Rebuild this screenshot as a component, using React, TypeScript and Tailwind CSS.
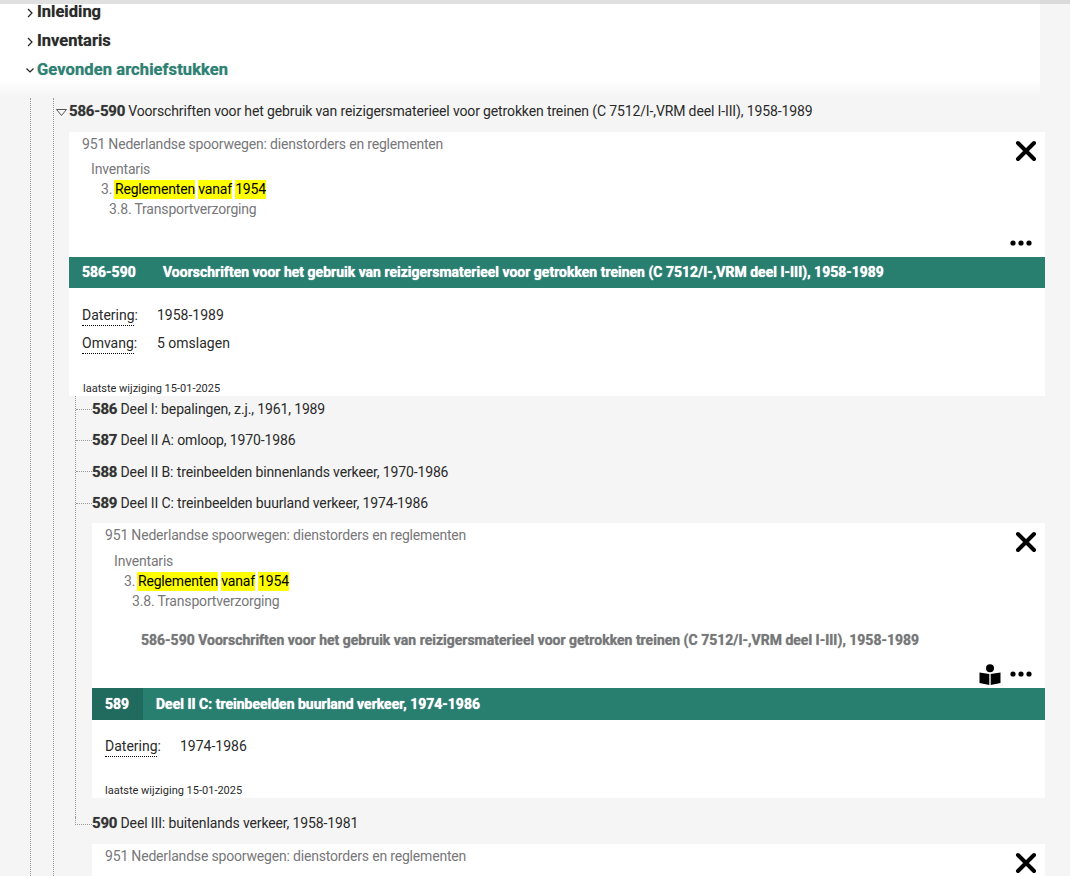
const font = { fontFamily: '"Roboto", "Liberation Sans", sans-serif' };

const heavy = "[text-shadow:0_0_1px_rgba(0,0,0,0.4)]";
const heavyLight = "[text-shadow:0_0_1px_#fff]";

function CloseIcon() {
  return (
    <svg className="h-[22px] w-[22px]" viewBox="0 0 22 22" fill="none" stroke="#000" strokeWidth="4" strokeLinecap="round">
      <path d="M3 3l16 16M19 3L3 19" />
    </svg>
  );
}

function Dots() {
  return (
    <svg className="h-[6px] w-[22px]" viewBox="0 0 22 6" fill="#000">
      <circle cx="3" cy="3" r="2.6" />
      <circle cx="11" cy="3" r="2.6" />
      <circle cx="19" cy="3" r="2.6" />
    </svg>
  );
}

function ReaderIcon() {
  return (
    <svg className="h-[21px] w-[22px]" viewBox="0 0 22 21" fill="#000">
      <circle cx="11" cy="4.2" r="4" />
      <path d="M0.5 8.5L10.3 10V21L0.5 19Z" />
      <path d="M21.5 8.5L11.7 10V21L21.5 19Z" />
    </svg>
  );
}

function Chevron() {
  return (
    <svg className="h-[10px] w-[6px] shrink-0" viewBox="0 0 6 10" fill="none" stroke="#222" strokeWidth="1.2">
      <path d="M1 1L5 5L1 9" />
    </svg>
  );
}

function Mark({ children, className = "" }: { children: string; className?: string }) {
  return <span className={`inline-block h-[19px] bg-[#ffff00] leading-[19px] text-black ${className}`}>{children}</span>;
}

function Breadcrumb({ parent }: { parent?: string }) {
  return (
    <div className="text-[14px] leading-[20px] tracking-[-0.18px] text-[#77777a]">
      <div className="pl-[13px] pt-[2px]">951 Nederlandse spoorwegen: dienstorders en reglementen</div>
      <div className={`${parent ? "mt-[6px]" : "mt-[5px]"} pl-[22px]`}>Inventaris</div>
      <div className="h-[20px] pl-[32px]">
        3. <Mark className="-ml-[1.5px] pl-[1px]">Reglementen</Mark> <Mark>vanaf</Mark> <Mark>1954</Mark>
      </div>
      <div className="pl-[40px]">3.8. Transportverzorging</div>
      {parent && (
        <div className={`mt-[19px] pl-[49px] font-bold tracking-normal ${heavy}`}>{parent}</div>
      )}
    </div>
  );
}

function Field({ label, value }: { label: string; value: string }) {
  return (
    <div className="flex h-[28px] items-start text-[14px] leading-[20px] text-[#2a2a2a]">
      <span className="w-[75px] shrink-0">
        <span className="block w-[52px] whitespace-nowrap border-b border-dotted border-black">{label}</span>
      </span>
      <span>{value}</span>
    </div>
  );
}

function TreeRow({ code, text, className = "h-[31.5px]" }: { code: string; text: string; className?: string }) {
  return (
    <div className={`flex items-center ${className}`}>
      <span className="w-[16px] shrink-0 border-t border-dotted border-[#999]" />
      <div className="text-[14px] tracking-[-0.13px] text-[#2a2a2a]">
        <b className={`text-[15px] tracking-[-0.2px] text-[#333] ${heavy}`}>{code}</b> {text}
      </div>
    </div>
  );
}

export default function App() {
  return (
    <div className="h-[876px] overflow-hidden bg-[#f5f5f5]" style={font}>
      <div className="flex h-[4px] bg-[#e0e0e0]">
        <div className="w-[1040px]" />
        <div className="flex-1 bg-[#d9d9d9]" />
      </div>

      <div className="h-[94px] w-[1040px] bg-gradient-to-b from-white from-[80%] to-[#f5f5f5]">
        <div className={`pl-[27px] pt-[1px] text-[16.5px] font-bold text-[#2a2a2a] ${heavy}`}>
          <div className="flex h-[15px] items-center gap-[4px]">
            <Chevron />
            <span>Inleiding</span>
          </div>
          <div className="mt-[7px] flex h-[29px] items-center gap-[4px]">
            <Chevron />
            <span>Inventaris</span>
          </div>
          <div className="-ml-[1px] flex h-[29px] items-center gap-[3px] text-[#2a8475]">
            <svg className="h-[5px] w-[8px]" viewBox="0 0 8 5" fill="none" stroke="#222" strokeWidth="1.2">
              <path d="M0.5 0.5L4 4L7.5 0.5" />
            </svg>
            <span className="tracking-[0.09px]">Gevonden archiefstukken</span>
          </div>
        </div>
      </div>

      <div className="ml-[30px] border-l border-dotted border-[#999] pl-[22px]">
        <div className="border-l border-dotted border-[#999] pl-[15px]">
          <div className="flex h-[34px] items-start pt-[3px] text-[14px] leading-[20px] tracking-[-0.13px] text-[#2a2a2a]">
            <svg className="-ml-[13px] mr-[2px] mt-[8px] h-[7px] w-[11px]" viewBox="0 0 11 7" fill="none" stroke="#555" strokeWidth="1">
              <path d="M0.5 0.5H10.5L5.5 6.5Z" />
            </svg>
            <b className={`text-[15px] tracking-[-0.2px] text-[#333] ${heavy}`}>586-590</b>
            <span className="ml-[3px]">
              Voorschriften voor het gebruik van reizigersmaterieel voor getrokken treinen (C 7512/I-,VRM deel I-III), 1958-1989
            </span>
          </div>

          <div className="w-[976px] bg-white">
            <div className="relative h-[125px]">
              <Breadcrumb />
              <div className="absolute right-[8px] top-[8px]">
                <CloseIcon />
              </div>
              <div className="absolute bottom-[11px] right-[13px]">
                <Dots />
              </div>
            </div>
            <div className={`flex h-[31px] items-center bg-[#287f70] pl-[13px] text-[14px] font-bold text-white ${heavyLight}`}>
              <span className="w-[81px]">586-590</span>
              <span>Voorschriften voor het gebruik van reizigersmaterieel voor getrokken treinen (C 7512/I-,VRM deel I-III), 1958-1989</span>
            </div>
            <div className="px-[13px] pt-[17px]">
              <Field label="Datering:" value="1958-1989" />
              <Field label="Omvang:" value="5 omslagen" />
              <div className="ml-[1px] mt-[20px] h-[15px] text-[11px] leading-[16px] text-[#2a2a2a]">laatste wijziging 15-01-2025</div>
            </div>
          </div>

          <div className="ml-[6px] border-l border-dotted border-[#999]">
            <TreeRow code="586" text="Deel I: bepalingen, z.j., 1961, 1989" className="h-[28.5px] pb-[2.5px]" />
            <TreeRow code="587" text="Deel II A: omloop, 1970-1986" />
            <TreeRow code="588" text="Deel II B: treinbeelden binnenlands verkeer, 1970-1986" />
            <TreeRow code="589" text="Deel II C: treinbeelden buurland verkeer, 1974-1986" />

            <div className="ml-[16px] mt-[4px] w-[953px] bg-white">
              <div className="relative h-[165px]">
                <Breadcrumb parent="586-590 Voorschriften voor het gebruik van reizigersmaterieel voor getrokken treinen (C 7512/I-,VRM deel I-III), 1958-1989" />
                <div className="absolute right-[8px] top-[8px]">
                  <CloseIcon />
                </div>
                <div className="absolute bottom-[3px] right-[13px] flex items-end gap-[9px]">
                  <ReaderIcon />
                  <div className="mb-[8px] flex">
                    <Dots />
                  </div>
                </div>
              </div>
              <div className={`flex h-[32px] items-center bg-[#287f70] text-[14px] font-bold text-white ${heavyLight}`}>
                <span className="flex h-full w-[51px] items-center bg-[#216a5e] pl-[13px]">589</span>
                <span className="pl-[13px]">Deel II C: treinbeelden buurland verkeer, 1974-1986</span>
              </div>
              <div className="px-[13px] pt-[16px]">
                <Field label="Datering:" value="1974-1986" />
                <div className="mt-[19px] h-[15px] text-[11px] leading-[16px] text-[#2a2a2a]">laatste wijziging 15-01-2025</div>
              </div>
            </div>
            <div className="h-[19px]" />
          </div>

          <div className="ml-[6px] flex h-[27px] items-start">
            <span className="h-[8px] w-[17px] shrink-0 border-b border-l border-dotted border-[#999]" />
            <div className="-mt-[4px] text-[14px] leading-[20px] tracking-[-0.13px] text-[#2a2a2a]">
              <b className={`text-[15px] tracking-[-0.2px] text-[#333] ${heavy}`}>590</b> Deel III: buitenlands verkeer, 1958-1981
            </div>
          </div>

          <div className="ml-[23px] w-[953px] bg-white">
            <div className="relative h-[32px] overflow-hidden text-[14px] leading-[20px] tracking-[-0.18px] text-[#77777a]">
              <div className="pl-[13px] pt-[2px]">951 Nederlandse spoorwegen: dienstorders en reglementen</div>
              <div className="absolute right-[8px] top-[8px]">
                <CloseIcon />
              </div>
            </div>
          </div>
        </div>
      </div>
    </div>
  );
}
